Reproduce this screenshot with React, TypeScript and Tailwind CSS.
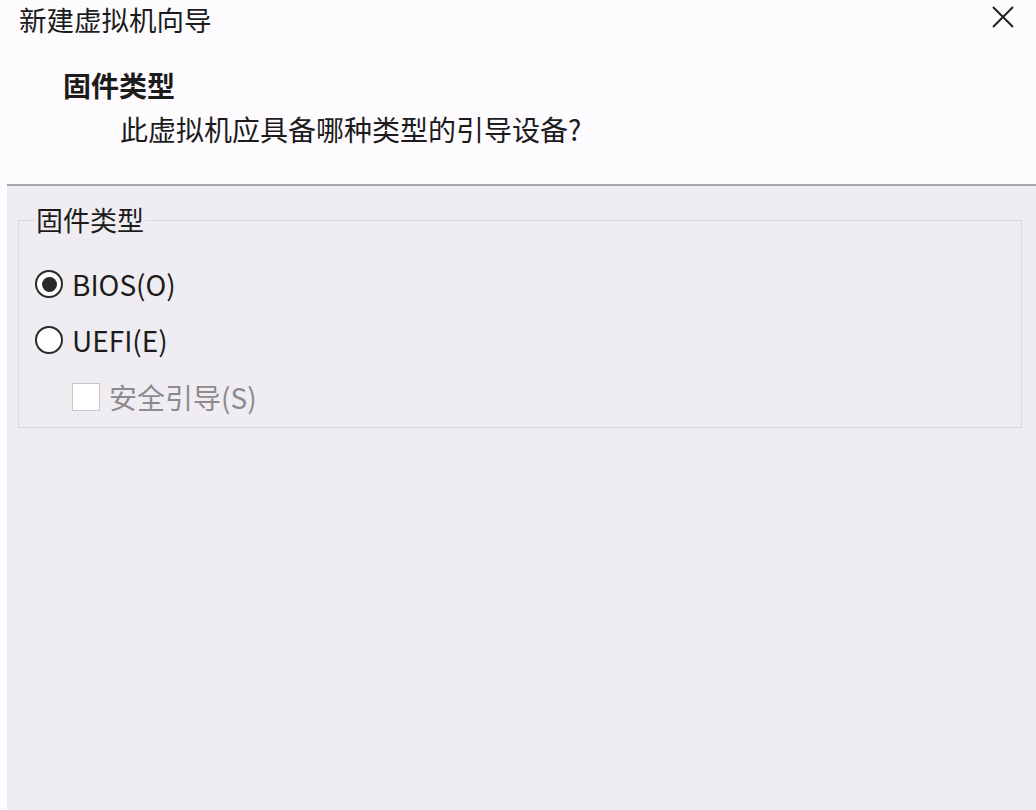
import React from "react";

export default function App() {
  const font = { fontFamily: '"Noto Sans CJK SC", "Noto Sans", sans-serif' } as React.CSSProperties;
  return (
    <div
      className="w-[1036px] h-[810px] bg-[#fefbfe] flex flex-col text-[#1c1c1c] overflow-hidden"
      style={font}
    >
      <div className="h-[184px] flex flex-col shrink-0">
        <div className="flex items-start justify-between">
          <div className="pl-[19px] text-[27.5px] leading-[38px]">新建虚拟机向导</div>
          <div className="mr-[22px] mt-[6px] w-[22px] h-[22px]">
            <svg width="22" height="22" viewBox="0 0 22 22">
              <path d="M1 1 L21 21 M21 1 L1 21" stroke="#222" strokeWidth="2" fill="none" />
            </svg>
          </div>
        </div>
        <div className="pl-[63px] mt-[29px] text-[28px] leading-[36px] font-bold">固件类型</div>
        <div className="pl-[120px] mt-[8px] text-[28px] leading-[36px]">此虚拟机应具备哪种类型的引导设备?</div>
      </div>
      <div className="ml-[7px] h-[2px] bg-[#a6a4a7] shrink-0" />
      <div className="ml-[7px] flex-1 bg-[#f0edf2] pt-[16px]">
        <fieldset className="ml-[11px] mr-[14px] border border-[#dcdadd] px-[16px] pb-[1px]">
          <legend className="px-[1px] text-[27px] leading-[36px]">固件类型</legend>
          <div className="mt-[18px]">
            <div className="h-[56px] flex items-center">
              <div className="w-[28px] h-[28px] rounded-full border-2 border-[#2a2a2a] bg-white flex items-center justify-center">
                <div className="w-[15px] h-[15px] rounded-full bg-[#2a2a2a]" />
              </div>
              <span className="ml-[9px] text-[28px] leading-[36px]">BIOS(O)</span>
            </div>
            <div className="h-[56px] flex items-center">
              <div className="w-[28px] h-[28px] rounded-full border-2 border-[#2a2a2a] bg-white" />
              <span className="ml-[9px] text-[28px] leading-[36px]">UEFI(E)</span>
            </div>
            <div className="h-[58px] flex items-center pl-[37px]">
              <div className="w-[28px] h-[28px] border border-[#c9c7ca] bg-white" />
              <span className="ml-[9px] text-[28px] leading-[36px] text-[#8c8a8d]">安全引导(S)</span>
            </div>
          </div>
        </fieldset>
      </div>
    </div>
  );
}
